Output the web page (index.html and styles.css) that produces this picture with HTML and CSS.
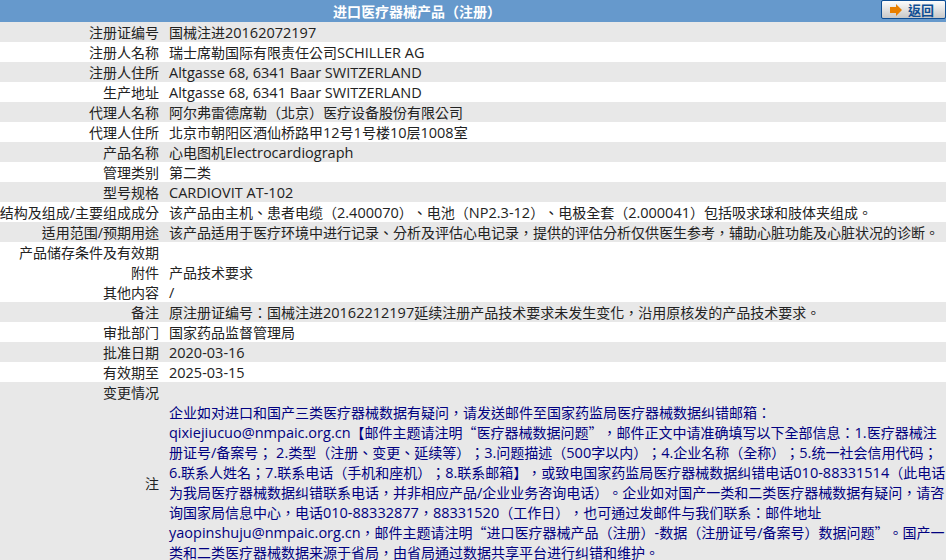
FILE: index.html
```html
<!DOCTYPE html>
<html lang="zh-TW">
<head>
<meta charset="utf-8">
<title>进口医疗器械产品（注册）</title>
<link rel="stylesheet" href="styles.css">
</head>
<body>
<main class="page">
  <header class="title-bar">
    <h1 class="title">进口医疗器械产品（注册）</h1>
    <a class="back" href="#">
      <svg class="back-icon" width="12" height="12" viewBox="0 0 12 12"><path d="M0 3h6V0l6 6-6 6V9H0z" fill="#e87f00"/></svg>
      <span>返回</span>
    </a>
  </header>
  <div class="row alt"><div class="label">注册证编号</div><div class="value">国械注进<span class="en">20162072197</span></div></div>
  <div class="row"><div class="label">注册人名称</div><div class="value">瑞士席勒国际有限责任公司<span class="en">SCHILLER AG</span></div></div>
  <div class="row alt"><div class="label">注册人住所</div><div class="value"><span class="en">Altgasse 68, 6341 Baar SWITZERLAND</span></div></div>
  <div class="row"><div class="label">生产地址</div><div class="value"><span class="en">Altgasse 68, 6341 Baar SWITZERLAND</span></div></div>
  <div class="row alt"><div class="label">代理人名称</div><div class="value">阿尔弗雷德席勒（北京）医疗设备股份有限公司</div></div>
  <div class="row"><div class="label">代理人住所</div><div class="value">北京市朝阳区酒仙桥路甲<span class="en">12</span>号<span class="en">1</span>号楼<span class="en">10</span>层<span class="en">1008</span>室</div></div>
  <div class="row alt"><div class="label">产品名称</div><div class="value">心电图机<span class="en">Electrocardiograph</span></div></div>
  <div class="row"><div class="label">管理类别</div><div class="value">第二类</div></div>
  <div class="row alt"><div class="label">型号规格</div><div class="value"><span class="en">CARDIOVIT AT-102</span></div></div>
  <div class="row"><div class="label"><span>结构及组成<span class="en">/</span>主要组成成分</span></div><div class="value">该产品由主机、患者电缆（<span class="en">2.400070</span>）、电池（<span class="en">NP2.3-12</span>）、电极全套（<span class="en">2.000041</span>）包括吸求球和肢体夹组成。</div></div>
  <div class="row alt"><div class="label"><span>适用范围<span class="en">/</span>预期用途</span></div><div class="value">该产品适用于医疗环境中进行记录、分析及评估心电记录，提供的评估分析仅供医生参考，辅助心脏功能及心脏状况的诊断。</div></div>
  <div class="row"><div class="label">产品储存条件及有效期</div><div class="value"></div></div>
  <div class="row"><div class="label">附件</div><div class="value">产品技术要求</div></div>
  <div class="row"><div class="label">其他内容</div><div class="value"><span class="en">/</span></div></div>
  <div class="row alt"><div class="label">备注</div><div class="value">原注册证编号：国械注进<span class="en">20162212197</span>延续注册产品技术要求未发生变化，沿用原核发的产品技术要求。</div></div>
  <div class="row"><div class="label">审批部门</div><div class="value">国家药品监督管理局</div></div>
  <div class="row alt"><div class="label">批准日期</div><div class="value"><span class="en">2020-03-16</span></div></div>
  <div class="row"><div class="label">有效期至</div><div class="value"><span class="en">2025-03-15</span></div></div>
  <div class="row alt"><div class="label">变更情况</div><div class="value"></div></div>
  <div class="row alt note-row"><div class="label">注</div><div class="value note">企业如对进口和国产三类医疗器械数据有疑问，请发送邮件至国家药监局医疗器械数据纠错邮箱：<br><span class="en">qixiejiucuo@nmpaic.org.cn</span>【邮件主题请注明“医疗器械数据问题”，邮件正文中请准确填写以下全部信息：<span class="en">1.</span>医疗器械注册证号<span class="en">/</span>备案号；<span class="en"> 2.</span>类型（注册、变更、延续等）；<span class="en">3.</span>问题描述（<span class="en">500</span>字以内）；<span class="en">4.</span>企业名称（全称）；<span class="en">5.</span>统一社会信用代码；<span class="en">6.</span>联系人姓名；<span class="en">7.</span>联系电话（手机和座机）；<span class="en">8.</span>联系邮箱】，或致电国家药监局医疗器械数据纠错电话<span class="en">010-88331514</span>（此电话为我局医疗器械数据纠错联系电话，并非相应产品<span class="en">/</span>企业业务咨询电话）。企业如对国产一类和二类医疗器械数据有疑问，请咨询国家局信息中心，电话<span class="en">010-88332877</span>，<span class="en">88331520</span>（工作日），也可通过发邮件与我们联系：邮件地址<br><span class="en">yaopinshuju@nmpaic.org.cn</span>，邮件主题请注明“进口医疗器械产品（注册）<span class="en">-</span>数据（注册证号<span class="en">/</span>备案号）数据问题”。国产一类和二类医疗器械数据来源于省局，由省局通过数据共享平台进行纠错和维护。</div></div>
</main>
</body>
</html>
```
FILE: styles.css
```css
html, body { margin: 0; padding: 0; overflow: hidden; background: #fff; }
body { font-family: "Noto Sans CJK TC", "Noto Sans CJK SC", sans-serif; font-size: 14px; color: #222; text-spacing-trim: space-all; text-autospace: no-autospace; }
.en { font-family: "Open Sans", sans-serif; font-size: 14.5px; line-height: 1; }
.page { width: 946px; }
.title-bar { height: 22px; background: #6699cc; display: flex; align-items: center; justify-content: center; padding-right: 112px; position: relative; }
.title { margin: 0; font-size: 14px; line-height: 20px; font-weight: bold; color: #fff; }
.back { position: absolute; right: 0; top: 0; width: 55px; height: 17px; padding-left: 8px; border: 1px solid #0e4e94; border-radius: 2px; background: linear-gradient(#fdfdfd, #c8c8c8); display: flex; align-items: center; gap: 6px; color: #0e4e94; font-size: 13px; font-weight: bold; text-decoration: none; }
.row { display: grid; grid-template-columns: 159px 1fr; column-gap: 10px; line-height: 20px; min-height: 20px; }
.alt { background: #e8e8e8; }
.label { display: flex; justify-content: flex-end; white-space: pre; }
.value { min-width: 0; }
.note-row .label { align-items: center; }
.note { color: #000080; padding-bottom: 1px; }
```
